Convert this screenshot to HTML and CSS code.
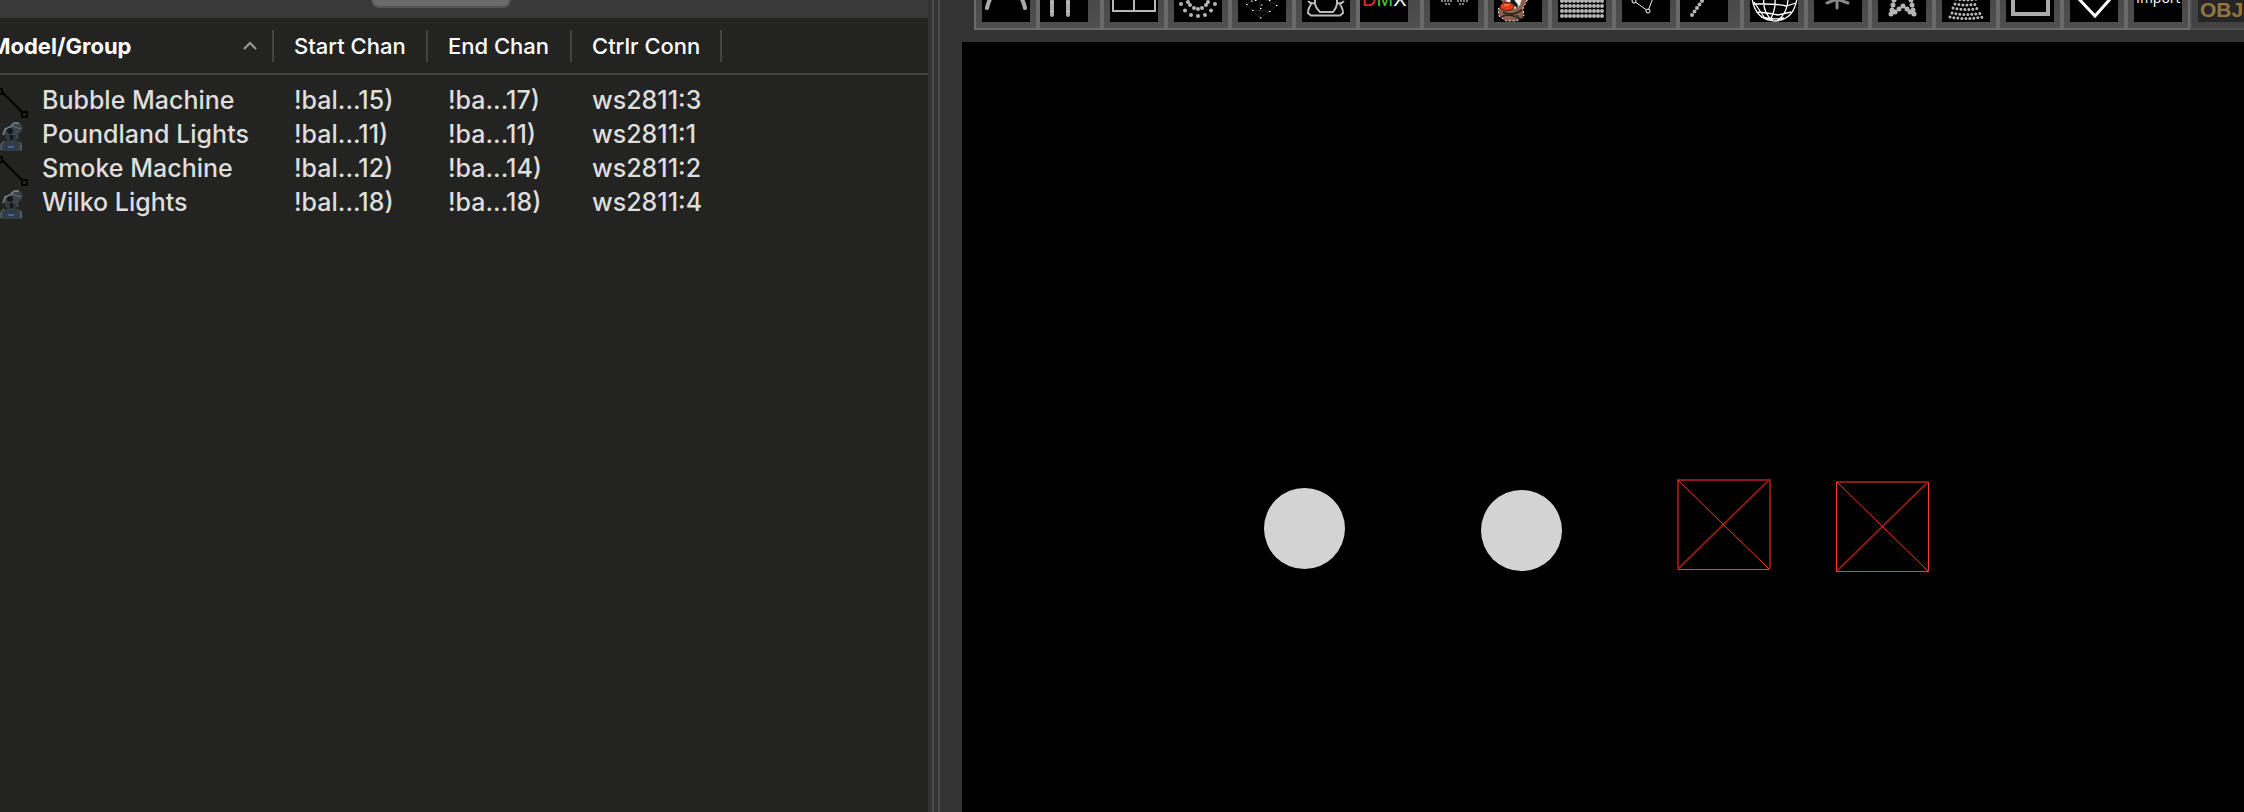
FILE: index.html
```
<!DOCTYPE html>
<html lang="en">
<head>
<meta charset="utf-8">
<title>Layout</title>
<link rel="stylesheet" href="styles.css">
</head>
<body>
<svg class="defs" aria-hidden="true">
  <symbol id="line" viewBox="0 0 28 36">
    <path d="M2 9 22 29" stroke="#000" stroke-width="2.2"/>
    <path d="M-4 6h6v5h-6zM22 29h5v5h-5z" fill="#232322" stroke="#000" stroke-width="1.8"/>
  </symbol>
  <symbol id="head" viewBox="0 -4 28 36">
    <path d="M3 15 5 8 10 6 14 2 20 2 23 7 20 12 18 13 19 18 6 18 5 13z" fill="#3c444a"/>
    <path d="M3 14 5 8 10 6 14 2h5" fill="none" stroke="#7c8991" stroke-width="1.4"/>
    <path d="M12 5 21 8" stroke="#65727a"/>
    <circle cx="10" cy="10" r="3" fill="#141719"/>
    <path d="M7 14h9v6H7z" fill="#2f373c"/><path d="M10 14h3v5h-3z" fill="#11161a"/>
    <path d="M1 23 4 20H19L22 22V30H1z" fill="#333c42"/>
    <path d="M1 29V23l3-3M21 22v7" fill="none" stroke="#6b7b85"/>
    <path d="M8 25h6v2H8z" fill="#3a62ad"/>
  </symbol>
</svg>
<div class="app">
  <section class="side">
    <div class="tabs"><button class="tab" aria-label="Models"></button></div>
    <div class="list">
      <table class="models">
        <colgroup><col class="c-name"><col class="c-start"><col class="c-end"><col class="c-conn"><col></colgroup>
        <thead>
          <tr>
            <th><div class="head first">Model/Group<svg class="sort" viewBox="0 0 16 10"><path d="M2 8 8 2 14 8"/></svg></div></th>
            <th><div class="head">Start Chan</div></th>
            <th><div class="head">End Chan</div></th>
            <th><div class="head">Ctrlr Conn</div></th>
            <td></td>
          </tr>
        </thead>
        <tbody>
          <tr><td><div class="name"><svg class="mi"><use href="#line"/></svg>Bubble Machine</div></td><td>!bal...15)</td><td>!ba...17)</td><td>ws2811:3</td><td></td></tr>
          <tr><td><div class="name"><svg class="mi"><use href="#head"/></svg>Poundland Lights</div></td><td>!bal...11)</td><td>!ba...11)</td><td>ws2811:1</td><td></td></tr>
          <tr><td><div class="name"><svg class="mi"><use href="#line"/></svg>Smoke Machine</div></td><td>!bal...12)</td><td>!ba...14)</td><td>ws2811:2</td><td></td></tr>
          <tr><td><div class="name"><svg class="mi"><use href="#head"/></svg>Wilko Lights</div></td><td>!bal...18)</td><td>!ba...18)</td><td>ws2811:4</td><td></td></tr>
        </tbody>
      </table>
    </div>
  </section>
  <div class="splitter"></div>
  <main class="preview">
    <div class="toolbar">
      <button class="tool" aria-label="Arches"><svg viewBox="0 0 48 22"><path class="beads" d="M5 8Q6 3 9-3M43 8Q42 3 39-3"/></svg></button>
      <button class="tool flush" aria-label="Candy canes"><svg viewBox="0 0 48 22"><path class="beads" d="M12-4V15M28-4V15"/><path class="sparks" d="M12 2v1m0 8v1M28 2v1m0 8v1"/></svg></button>
      <button class="tool" aria-label="Channel block"><svg viewBox="0 0 48 22"><path d="M3-4V11H45V-4M24-4V11" fill="none" stroke="#b8b8b8" stroke-width="2"/></svg></button>
      <button class="tool" aria-label="Circle"><svg viewBox="0 0 48 22"><path class="dots" d="M7 4h0M11 10.500h0M17 15h0M24 16h0M31 15h0M37 10.500h0M41 4h0M14 2h0M16 5h0M20 8h0M24 9h0M28 8h0M32 5h0M34 2h0"/></svg></button>
      <button class="tool" aria-label="Cube"><svg viewBox="0 0 48 22"><path d="M8 4 22 18 39 5M14 10 31 11M8 4 24-2 39 5M22-2V18" fill="none" stroke="#444" stroke-width=".6"/><path class="sparks" d="M8 4.500h1.500M14 10.500h1.500M22 8.500h1.500M22 18h1.500M31 11.500h1.500M38 5.500h1.500M13 1h1.500M17 .5h1.500M31 .5h1.500M23 5h1.500"/></svg></button>
      <button class="tool" aria-label="Custom"><svg viewBox="0 0 48 22"><path class="fine" d="M6 1Q8 4 13 3V-1M42 1Q40 4 35 3V-1M10 3Q6 8 6 13L9 15.500H38L41 13Q41 8 37 3M13 3Q13 7 18 12H31Q35 7 35 3"/></svg></button>
      <button class="tool flush" aria-label="DMX"><svg viewBox="0 0 48 22"><text class="dmx" x="2" y="6"><tspan fill="#e02a20">D</tspan><tspan fill="#48c832">M</tspan><tspan fill="#fff">X</tspan></text></svg></button>
      <button class="tool" aria-label="Icicles"><svg viewBox="0 0 48 22"><path class="pips" d="M12 1h0M15 1h0M18 1h0M21 1h0M28 1h0M31 1h0M34 1h0M37 1h0M16 4h0M19 4h0M30 4h0M33 4h0"/></svg></button>
      <button class="tool" aria-label="Image"><svg viewBox="0 0 48 22"><path d="M7-1 10 4 4 9 5 16 12 21H23L30 16 29 8 33 1V-3H8z" fill="#8b604d" stroke="#eee" stroke-width="1" stroke-dasharray="2 2"/><path d="M11-2 14 4 21 9 26 5 28-2z" fill="#eee"/><path d="M18-3 24 5 23 8 16 2z" fill="#171717"/><path d="M9 12Q17 17 28 10M7 17Q14 13 22 17T29 16" fill="none" stroke="#282019" stroke-width="1.5"/><path d="M21 16h4" stroke="#39452c" stroke-width="2"/><ellipse cx="13" cy="6.500" rx="7" ry="4" fill="#e83c1c" stroke="#541a10"/><path d="M10 5h5" stroke="#ff9c75"/></svg></button>
      <button class="tool" aria-label="Matrix"><svg viewBox="0 0 48 22"><path class="grid" d="M4 1H46M4 6H46M4 11H46M4 16H46"/></svg></button>
      <button class="tool" aria-label="Poly line"><svg viewBox="0 0 48 22"><path d="M10-3 12 1 26 11 31-2" fill="none" stroke="#eee"/><circle cx="12" cy="1" r="2" fill="#000" stroke="#fff"/><circle cx="26" cy="11" r="2" fill="#000" stroke="#fff"/></svg></button>
      <button class="tool flush" aria-label="Single line"><svg viewBox="0 0 48 22"><path class="dots" d="M12 15h0M14.500 11.500h0M17 8h0M19.500 4.500h0M22 1h0"/></svg></button>
      <button class="tool" aria-label="Sphere"><svg viewBox="0 0 48 22"><path d="M2-2Q5 20 25 21 44 20 47-2M14-2Q12 12 23 21M25-2Q26 10 20 20M38-2Q38 13 27 21M3 4 12 4Q28 4 36 6L46 3M6 12Q20 13 28 15L41 12M11 17Q22 20 34 18M4 2 14 17" fill="none" stroke="#fff" stroke-width="1.3"/></svg></button>
      <button class="tool" aria-label="Spinner"><svg viewBox="0 0 48 22"><path d="M23-4V8M23-1 13 3M23-1 34 3" fill="none" stroke="#888" stroke-width="3" stroke-linecap="round"/></svg></button>
      <button class="tool" aria-label="Star"><svg viewBox="0 0 48 22"><path class="dots star" d="M16 0h0M15 5h0M14 10h0M13 14h0M17 12h0M21 9h0M25 6h0M29 9h0M32 12h0M36 14h0M35 10h0M34 5h0M33 0h0"/></svg></button>
      <button class="tool" aria-label="Tree"><svg viewBox="0 0 48 22"><path class="grains" d="M14-1Q24 1 35-1M13 4Q24 6 36 4M11 8Q24 11 38 8M10 13Q24 16 40 13M8 17Q24 20 42 17"/></svg></button>
      <button class="tool" aria-label="Window frame"><svg viewBox="0 0 48 22"><path class="beads" d="M7-4V14H42V-4"/></svg></button>
      <button class="tool" aria-label="Wreath"><svg viewBox="0 0 48 22"><path d="M8-2 25 16 41-2" fill="none" stroke="#fff" stroke-width="3"/></svg></button>
      <button class="tool" aria-label="Import"><svg viewBox="0 0 48 22"><text class="import" x="2" y="3">Import</text></svg></button>
      <button class="tool dim" aria-label="Object" disabled><svg viewBox="0 0 48 22"><text class="obj" x="2" y="17">OBJ</text></svg></button>
    </div>
    <div class="canvas">
      <div class="lamp l1"></div>
      <div class="lamp l2"></div>
      <svg class="box b1" viewBox="0 0 94 92"><path d="M1 90V1H93V90M1 90 92 1" class="dark"/><path d="M1 90.500H92M1 1 92 90"/></svg>
      <svg class="box b2" viewBox="0 0 94 92"><path d="M1 1H92M1 90 92 1" class="dark"/><path d="M.5 1V90.500H92.500V1M1 1 92 90"/></svg>
    </div>
  </main>
</div>
</body>
</html>
```
FILE: styles.css
```
* { box-sizing: border-box; }
body { margin: 0; background: #333; font-family: Inter, "Liberation Sans", sans-serif; }
button { font: inherit; }
.defs { position: absolute; width: 0; height: 0; }
.app { display: flex; height: 100vh; overflow: hidden; }

.side { flex: 0 0 928px; display: flex; flex-direction: column; min-width: 0; }
.tabs { height: 18px; padding-left: 371px; background: #393939; }
.tab {
  display: block; width: 140px; height: 8px; padding: 0;
  background: #6b6b6b; border: 2px solid #555; border-top: 0; border-radius: 0 0 8px 8px;
}
.list { flex: 1; background: #232322; overflow: hidden; }
.models { width: 100%; table-layout: fixed; border-collapse: collapse; font-size: 25px; line-height: 34px; color: #dededd; font-weight: 500; }
.c-name { width: 274px; }
.c-start { width: 154px; }
.c-end { width: 144px; }
.c-conn { width: 150px; }
.models td, .models th { padding: 0; white-space: nowrap; }
.models td + td { padding-left: 20px; }
thead tr { border-bottom: 2px solid #434342; height: 56px; }
.head {
  height: 32px; line-height: 32px; padding-left: 20px; text-align: left;
  border-right: 2px solid #444443; font-size: 22px; font-weight: 500; color: #fff;
}
.head.first { display: flex; align-items: center; justify-content: space-between; padding: 0 14px 0 0; font-weight: 700; text-indent: -10px; }
.sort { width: 16px; height: 10px; fill: none; stroke: #9b9b9b; stroke-width: 2; }
tbody::before { content: ""; display: block; height: 8px; }
.name { display: flex; gap: 14px; height: 34px; }
.mi { flex: none; width: 28px; height: 36px; }

.splitter { flex: 0 0 34px; background: linear-gradient(90deg, transparent 4px, #4b4b4b 4px 6px, transparent 6px 10px, #4b4b4b 10px 12px, transparent 12px), #333; }
.preview { flex: 1; display: flex; flex-direction: column; min-width: 0; }
.toolbar { display: flex; height: 30px; margin: 0 0 12px 12px; }
.tool {
  flex: 0 0 64px; height: 30px; padding: 0 6px; display: block;
  background: linear-gradient(#484848, #505050); border: 2px solid #6a6a6a; border-top: 0; border-radius: 0;
}
.tool.flush { padding-left: 0; }
.tool svg { display: block; width: 48px; height: 22px; margin-bottom: 6px; background: #000; }
.tool.dim { background: #424242; border-color: #505050; }
.tool.dim svg { background: #252525; }
.beads { fill: none; stroke: #aaa; stroke-width: 4; stroke-linecap: round; }
.sparks { fill: none; stroke: #fff; stroke-width: 1; }
.dots { stroke: #b5b5b5; stroke-width: 4; stroke-linecap: round; }
.dots.star { stroke-width: 5; }
.pips { stroke: #aaa; stroke-width: 2; stroke-linecap: round; }
.fine { fill: none; stroke: #bbb; stroke-width: 2; }
.grains { fill: none; stroke: #bbb; stroke-width: 3; stroke-linecap: round; stroke-dasharray: 0 4; }
.grid { stroke: #b5b5b5; stroke-width: 4; stroke-linecap: round; stroke-dasharray: 0 4; }
.dmx { font: 20px "Liberation Sans", sans-serif; }
.import { font: 14px "Open Sans", sans-serif; fill: #fff; }
.obj { font: 700 21px "Liberation Sans", sans-serif; fill: #947542; }

.canvas { flex: 1; position: relative; background: #000; }
.lamp { position: absolute; width: 81px; height: 81px; border-radius: 50%; background: #d3d3d3; }
.l1 { left: 302px; top: 446px; }
.l2 { left: 519px; top: 448px; }
.box { position: absolute; width: 94px; height: 92px; fill: none; stroke: #ff3826; stroke-width: 1; }
.box .dark { stroke: #8c1a12; stroke-width: 2; }
.b1 { left: 715px; top: 437px; }
.b2 { left: 874px; top: 439px; }
```
